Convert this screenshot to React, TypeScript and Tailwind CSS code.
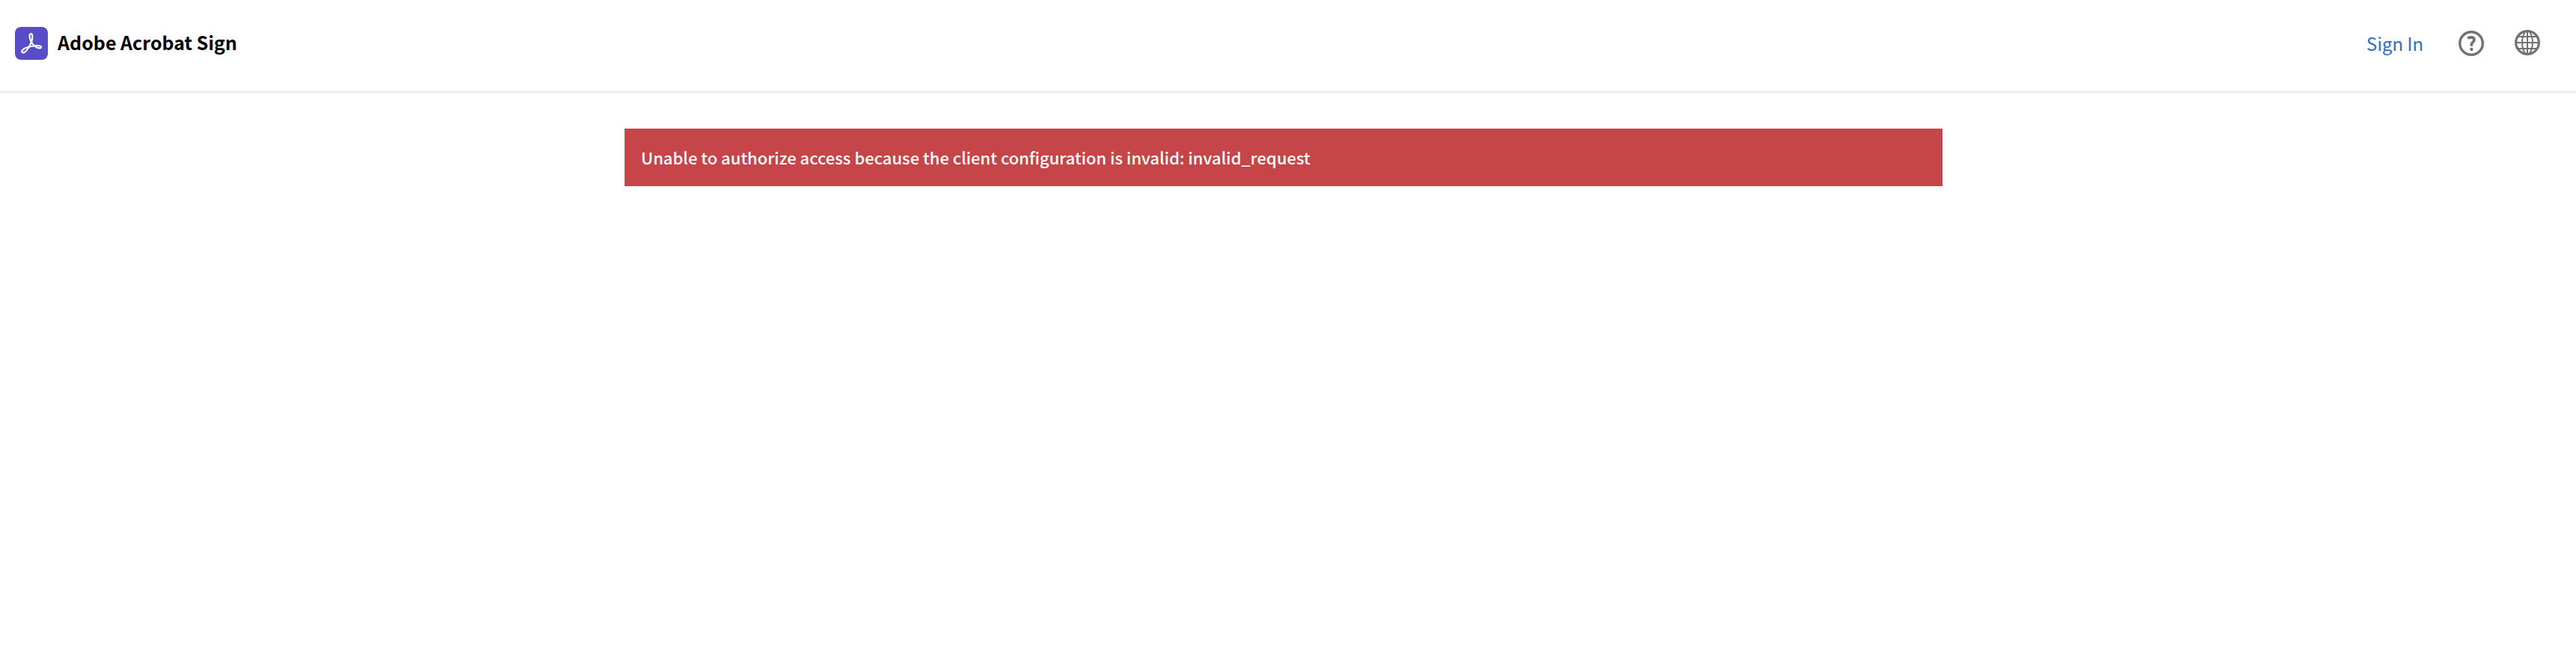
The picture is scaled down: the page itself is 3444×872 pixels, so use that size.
function AcrobatLogo() {
  return (
    <svg viewBox="0 0 44 44" className="size-11 shrink-0" aria-hidden="true">
      <rect width="44" height="44" rx="8" fill="#584dc7" />
      <path
        d="M21.4 9C19.4 9 19.3 12 19.8 14.6C20.2 16.7 21.2 18.8 21.8 20.4C20.4 24.6 17.8 28.8 15.4 31.7C13.4 34.2 10.6 35 9.6 33.9C8.4 32.4 10 30.3 13 28.7C16 27.1 20.8 26 25.6 25.3C28.6 24.9 31.6 24.9 33.6 25.6C35.8 26.4 35.4 28.3 33.2 28.4C30.8 28.5 28 27.2 25.8 25.2C24 23.6 22.6 21.6 22.1 20.1C22.8 17.9 23.3 15.6 23.3 13.4C23.3 10.8 22.9 9 21.4 9Z"
        fill="none"
        stroke="#fff"
        strokeWidth="2.1"
        strokeLinejoin="round"
      />
    </svg>
  );
}

function HelpIcon() {
  return (
    <svg viewBox="0 0 34 34" className="size-[34px]" fill="none" stroke="#727272" aria-hidden="true">
      <circle cx="17" cy="17" r="15.3" strokeWidth="3.4" />
      <path d="M12.200 10.300C13.600 9.200 15.200 8.800 16.900 8.800C19.500 8.800 20.900 10.200 20.900 12.200C20.900 15.300 17.300 15.400 17.300 18.600V20.800" strokeWidth="3.7" />
      <circle cx="17.3" cy="25" r="2.2" fill="#727272" stroke="none" />
    </svg>
  );
}

function GlobeIcon() {
  return (
    <svg viewBox="0 0 34 34" className="size-[34px]" fill="none" stroke="#727272" strokeWidth="2" aria-hidden="true">
      <circle cx="17" cy="17" r="15.4" strokeWidth="3.2" />
      <path d="M17 2V32M2 17H32M5 9H29M5 25H29" />
      <path d="M14.5 2C11.5 6 10 11 10 17S11.5 28 14.5 32M19.5 2C22.5 6 24 11 24 17S22.5 28 19.5 32" />
    </svg>
  );
}

export default function App() {
  return (
    <div className="min-h-screen bg-white font-['Noto_Sans_CJK_SC',sans-serif]">
      <header className="flex items-start justify-between border-b-2 border-[#e9e9e9] pt-9 pr-12 pb-[42px] pl-5">
        <a href="#home" className="flex h-11 items-start gap-[13px] text-[25px] leading-10 font-bold text-black">
          <AcrobatLogo />
          <span>Adobe Acrobat Sign</span>
        </a>
        <nav className="flex h-11 items-center">
          <a href="#sign-in" className="mr-[47px] text-2xl leading-10 text-[#2f6dc3]">
            Sign In
          </a>
          <button type="button" aria-label="Help" className="mr-[41px]">
            <HelpIcon />
          </button>
          <button type="button" aria-label="Language" className="pb-0.5">
            <GlobeIcon />
          </button>
        </nav>
      </header>
      <main className="pt-12 pr-3">
        <div role="alert" className="mx-auto max-w-[1762px] bg-[#c64549] px-[22px] py-[18px] text-[22px] leading-[41px] font-medium text-white">
          Unable to authorize access because the client configuration is invalid: invalid_request
        </div>
      </main>
    </div>
  );
}
